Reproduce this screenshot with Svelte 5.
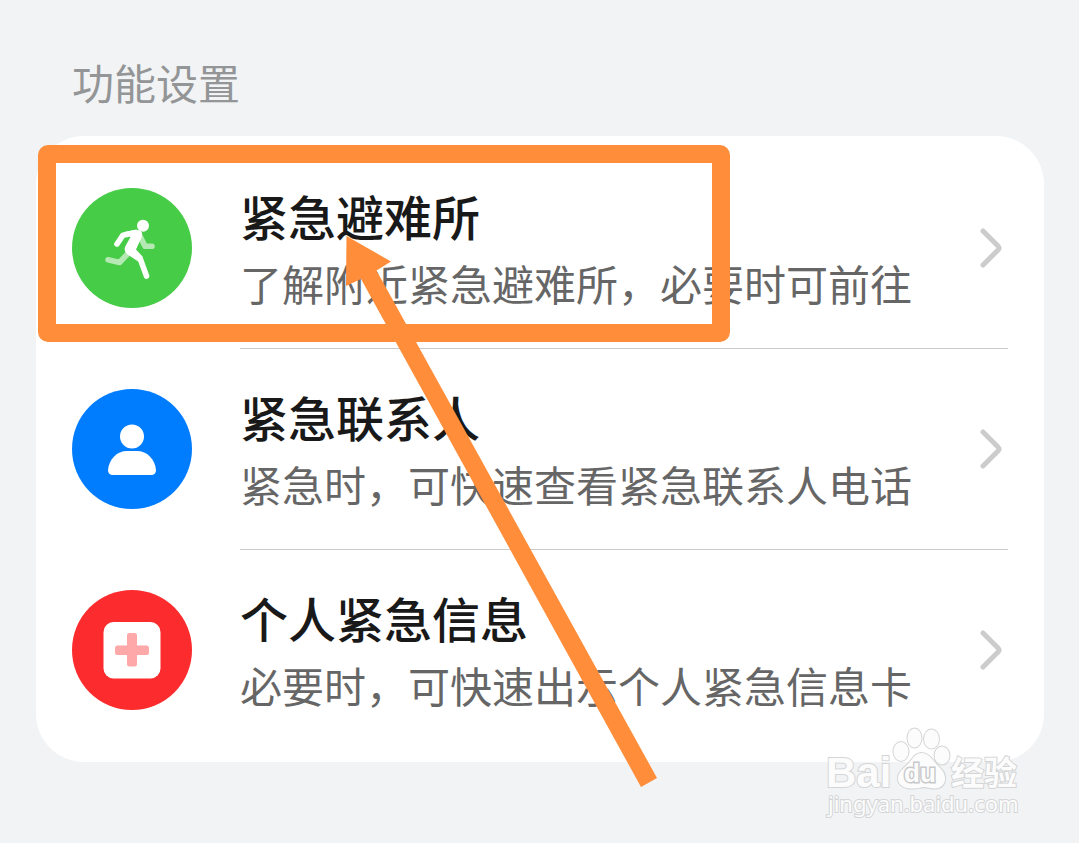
<script>
  const items = [
    { icon: 'run', title: '紧急避难所', note: '了解附近紧急避难所，必要时可前往' },
    { icon: 'person', title: '紧急联系人', note: '紧急时，可快速查看紧急联系人电话' },
    { icon: 'medical', title: '个人紧急信息', note: '必要时，可快速出示个人紧急信息卡' }
  ];
</script>

<main class="page">
  <h1>功能设置</h1>

  <ul class="card">
    {#each items as item}
      <li>
        <a href="#{item.icon}" class="row">
          <span class="badge {item.icon}">
            <svg viewBox="0 0 120 120" aria-hidden="true">
              {#if item.icon === 'run'}
                <g fill="none" stroke-linecap="round" stroke-linejoin="round">
                  <path d="M56 65.500L47.500 74.500L36 71.800M69 50L73 58.200L80 58.200" stroke="#b5e9b3" stroke-width="5.600" />
                  <path d="M45 56L51 47.200L64 44.500" stroke="#fff" stroke-width="5.600" />
                  <path d="M60 64L68.500 71.500L74.500 88" stroke="#fff" stroke-width="5.600" />
                </g>
                <path d="M53 43.800L64 41.700Q71.500 42 70 48.500L64 61.500L71 69L67 74L55.500 66.500Q51 63 53.500 58L58.500 49Z" fill="#fff" />
                <circle cx="71" cy="37.700" r="6" fill="#fff" />
              {:else if item.icon === 'person'}
                <circle cx="60" cy="47.500" r="12" fill="#fff" />
                <path d="M41 86Q36 86 36 81C37 70 45 62 55 62H65C75 62 83 70 84 81Q84 86 79 86Z" fill="#fff" />
              {:else}
                <rect x="31.500" y="32" width="57" height="56.500" rx="10" fill="#fff" />
                <path d="M57.500 43H62.500Q65 43 65 45.500V55.500H74.500Q77 55.500 77 58V62.500Q77 65 74.500 65H65V74Q65 76.500 62.500 76.500H57.500Q55 76.500 55 74V65H45.500Q43 65 43 62.500V58Q43 55.500 45.500 55.500H55V45.500Q55 43 57.500 43Z" fill="#ffa8aa" />
              {/if}
            </svg>
          </span>
          <span class="body">
            <span class="words">
              <span class="title">{item.title}</span>
              <span class="note">{item.note}</span>
            </span>
            <svg class="chevron" viewBox="0 0 24 42" aria-hidden="true">
              <path d="M3 4L18 19Q20 21 18 23L3 38" />
            </svg>
          </span>
        </a>
      </li>
    {/each}
  </ul>

  <div class="frame"></div>
  <svg class="arrow" viewBox="0 0 311 551" aria-hidden="true">
    <path d="M0.500 0L45 25.500L30.500 34.500L311 542L295 551L15 43L0 50Z" />
  </svg>

  <svg class="mark" viewBox="0 0 200 94" role="img" aria-label="Baidu 经验 jingyan.baidu.com">
    <g class="shape">
      <ellipse cx="79" cy="24.500" rx="7.500" ry="9.500" />
      <ellipse cx="92.500" cy="11" rx="7" ry="9.500" />
      <ellipse cx="109.500" cy="12" rx="7.500" ry="9.500" />
      <ellipse cx="120" cy="28.500" rx="7.500" ry="9" />
      <path d="M99 26C108 26 111 34 117 40C126 47 125 60 114 61.500C107 62 104 59 99 60.500C93 62 82 63 77 56C74 49 78 44 84 39C90 34 91 27 99 26Z" />
      <text class="latin" x="4" y="60" font-size="42">Bai</text>
      <text class="latin du" x="82" y="55" font-size="26">du</text>
      <text class="han" x="129" y="58" font-size="33">经验</text>
      <text class="url" x="6" y="85" font-size="22">jingyan.baidu.com</text>
    </g>
  </svg>
</main>

<style>
  :global(body) {
    margin: 0;
    background: #f1f3f5;
  }
  .page {
    position: relative;
    padding: 52px 35px 80px 36px;
    font-family: 'Noto Sans CJK SC', sans-serif;
  }
  h1 {
    margin: 0 0 24px;
    padding: 0 36px;
    font-size: 42px;
    line-height: 60px;
    font-weight: 400;
    color: #949596;
  }
  .card {
    margin: 0;
    padding: 12px 36px;
    list-style: none;
    background: #fff;
    border-radius: 48px;
  }
  .row {
    display: flex;
    align-items: center;
    gap: 48px;
    color: inherit;
    text-decoration: none;
  }
  .badge {
    flex: none;
    width: 120px;
    height: 120px;
    border-radius: 50%;
  }
  .badge svg {
    display: block;
  }
  .run { background: #47cc47; }
  .person { background: #007dff; }
  .medical { background: #fc2b2d; }
  .body {
    flex: 1;
    min-width: 0;
    display: flex;
    align-items: center;
    justify-content: space-between;
    height: 200px;
  }
  li + li .body {
    border-top: 1px solid #cbcbcb;
  }
  .words {
    display: flex;
    flex-direction: column;
    gap: 4px;
    padding-bottom: 8px;
    white-space: nowrap;
  }
  .title {
    font-size: 48px;
    line-height: 74px;
    font-weight: 500;
    color: #191919;
  }
  .note {
    font-size: 42px;
    line-height: 54px;
    color: #666;
  }
  .chevron {
    flex: none;
    width: 24px;
    height: 42px;
    margin-right: 4px;
    fill: none;
    stroke: #ccc;
    stroke-width: 5px;
    stroke-linecap: round;
  }
  .frame {
    position: absolute;
    left: 38px;
    top: 145px;
    box-sizing: border-box;
    width: 692px;
    height: 197px;
    border: 18px solid #ff8d3a;
    border-radius: 10px;
  }
  .arrow {
    position: absolute;
    left: 346px;
    top: 236px;
    width: 311px;
    height: 551px;
    fill: #ff8d3a;
  }
  .mark {
    position: absolute;
    right: 57px;
    top: 727px;
    width: 200px;
    height: 94px;
  }
  .shape {
    fill: #fcfcfc;
    stroke: #d4d5d6;
    stroke-width: 2px;
    paint-order: stroke;
  }
  .latin {
    font-family: 'Liberation Sans', sans-serif;
    font-weight: 700;
  }
  .du {
    stroke: #c8c9ca;
    stroke-width: 3px;
  }
  .han {
    font-family: 'Noto Sans CJK SC', sans-serif;
    font-weight: 700;
  }
  .url {
    font-family: 'Noto Sans', sans-serif;
  }
</style>
